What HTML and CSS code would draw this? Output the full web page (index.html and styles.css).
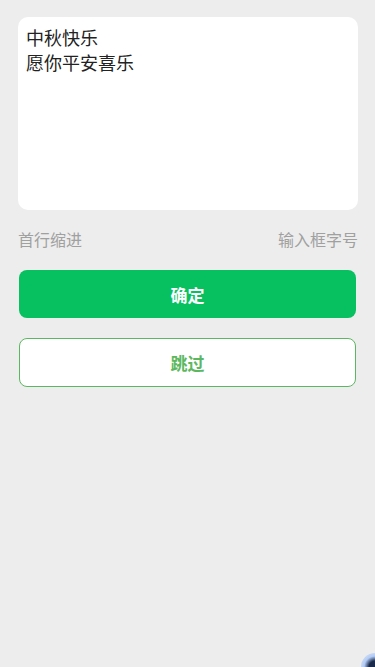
FILE: index.html
```html
<!DOCTYPE html>
<html lang="zh-CN">
<head>
    <meta charset="UTF-8">
    <meta content="width=device-width, initial-scale=1.0" name="viewport">
    <title>输入文字</title>
    <link rel="stylesheet" href="styles.css">
</head>
<body>
<div class="page">
    <textarea class="text-box" id="text-box">中秋快乐
愿你平安喜乐</textarea>

    <div class="options">
        <span class="option">首行缩进</span>
        <span class="option">输入框字号</span>
    </div>

    <button class="btn btn-primary" id="ok-btn">确定</button>
    <button class="btn btn-plain" id="skip-btn">跳过</button>
</div>
<div class="cursor-glow"></div>
</body>
</html>
```

FILE: styles.css
```css
html, body {
    margin: 0;
    padding: 0;
    height: 100%;
    background-color: #ededed;
    font-family: "Noto Sans CJK SC", "Microsoft YaHei", sans-serif;
    overflow: hidden;
}

.page {
    padding: 17px 17px 0 18px;
    display: flex;
    flex-direction: column;
}

.text-box {
    display: block;
    box-sizing: border-box;
    width: 100%;
    height: 193px;
    border: none;
    outline: none;
    resize: none;
    border-radius: 10px;
    background-color: #fff;
    padding: 8px 8px;
    margin: 0;
    font-family: inherit;
    font-size: 18px;
    line-height: 25px;
    color: #222;
}

.options {
    display: flex;
    justify-content: space-between;
    margin-top: 18px;
    font-size: 16px;
    line-height: 22px;
    color: #a0a0a0;
}

.btn {
    display: block;
    box-sizing: border-box;
    margin: 0 2px 0 1px;
    height: 48px;
    border-radius: 8px;
    font-family: inherit;
    font-size: 17px;
    font-weight: bold;
    cursor: pointer;
}

.btn-primary {
    margin-top: 20px;
    border: none;
    background-color: #07c160;
    color: #fff;
}

.btn-plain {
    margin-top: 20px;
    height: 49px;
    border: 1px solid #5cb860;
    background-color: #fff;
    color: #5cb860;
}

.cursor-glow {
    position: fixed;
    right: -14px;
    bottom: -14px;
    width: 28px;
    height: 28px;
    border-radius: 50%;
    background: radial-gradient(circle, #1a2a4a 0, #1a2a4a 30%, rgba(120, 170, 255, 0.5) 55%, rgba(200, 220, 255, 0) 100%);
}
```
